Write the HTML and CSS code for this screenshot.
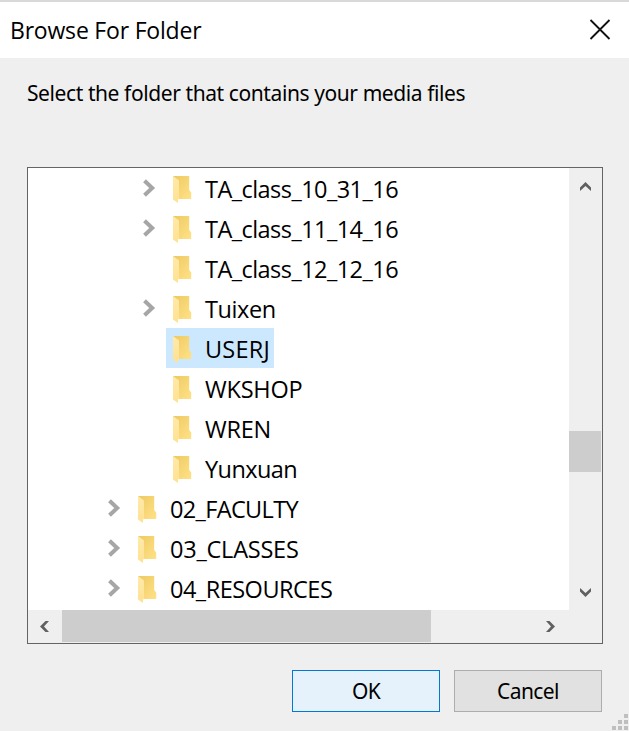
FILE: index.html
```html
<!DOCTYPE html>
<html lang="en">
<head>
<meta charset="utf-8">
<title>Browse For Folder</title>
<link rel="stylesheet" href="styles.css">
</head>
<body>
<svg width="0" height="0" class="defs" aria-hidden="true">
  <defs>
    <linearGradient id="back" x1="0" y1="0" x2="1" y2="1"><stop offset="0" stop-color="#eec962"/><stop offset="1" stop-color="#ffe287"/></linearGradient>
    <linearGradient id="front" x1="0" y1="0" x2="0" y2="1"><stop offset="0" stop-color="#ffeaaa"/><stop offset="1" stop-color="#ffe191"/></linearGradient>
    <symbol id="folder" viewBox="0 0 20 28"><path fill="url(#back)" d="M0 0h16.200v14l2 2.500V23H5V5L0 .5z"/><path fill="url(#front)" d="M0 0l6 4.500V23l-1 .5V27L0 23.500z"/></symbol>
    <symbol id="chevron" viewBox="0 0 13 19"><path fill="none" stroke="#a6a6a6" stroke-width="4" d="M1.500 1.700l7.700 7.300-7.700 7.300"/></symbol>
  </defs>
</svg>
<div class="dialog">
  <header class="titlebar">
    <span class="title">Browse For Folder</span>
    <svg class="close" width="22" height="22" viewBox="0 0 22 22"><path fill="none" stroke="#111" stroke-width="1.800" d="M1.500 1l19 19M20.500 1l-19 19"/></svg>
  </header>
  <p class="prompt">Select the folder that contains your media files</p>
  <div class="tree">
    <ul class="items">
      <li><svg class="chevron"><use href="#chevron"/></svg><span class="node"><svg class="folder"><use href="#folder"/></svg><span class="dated">TA_class_10_31_16</span></span></li>
      <li><svg class="chevron"><use href="#chevron"/></svg><span class="node"><svg class="folder"><use href="#folder"/></svg><span class="dated">TA_class_11_14_16</span></span></li>
      <li><span class="chevron"></span><span class="node"><svg class="folder"><use href="#folder"/></svg><span class="dated">TA_class_12_12_16</span></span></li>
      <li><svg class="chevron"><use href="#chevron"/></svg><span class="node"><svg class="folder"><use href="#folder"/></svg><span class="tuixen">Tuixen</span></span></li>
      <li><span class="chevron"></span><span class="node selected"><svg class="folder"><use href="#folder"/></svg><span class="userj">USERJ</span></span></li>
      <li><span class="chevron"></span><span class="node"><svg class="folder"><use href="#folder"/></svg><span class="wkshop">WKSHOP</span></span></li>
      <li><span class="chevron"></span><span class="node"><svg class="folder"><use href="#folder"/></svg><span class="wren">WREN</span></span></li>
      <li><span class="chevron"></span><span class="node"><svg class="folder"><use href="#folder"/></svg><span class="yunxuan">Yunxuan</span></span></li>
      <li class="parent"><svg class="chevron"><use href="#chevron"/></svg><span class="node"><svg class="folder"><use href="#folder"/></svg><span class="faculty">02_FACULTY</span></span></li>
      <li class="parent"><svg class="chevron"><use href="#chevron"/></svg><span class="node"><svg class="folder"><use href="#folder"/></svg><span class="classes">03_CLASSES</span></span></li>
      <li class="parent"><svg class="chevron"><use href="#chevron"/></svg><span class="node"><svg class="folder"><use href="#folder"/></svg><span class="resources">04_RESOURCES</span></span></li>
    </ul>
    <div class="vbar">
      <svg class="up" width="12" height="10" viewBox="0 0 12 10"><path fill="#606060" d="M0 5.500L5.500 0 11 5.500V9L5.500 4 0 9z"/></svg>
      <div class="vthumb"></div>
      <svg class="down" width="12" height="10" viewBox="0 0 12 10"><path fill="#606060" d="M0 0l5.500 5L11 0v3.500L5.500 9 0 3.500z"/></svg>
    </div>
    <div class="hbar">
      <svg class="left" width="10" height="12" viewBox="0 0 10 12"><path fill="#606060" d="M9 0H5.500L0 5.500 5.500 11H9L4 5.500z"/></svg>
      <div class="hthumb"></div>
      <svg class="right" width="10" height="12" viewBox="0 0 10 12"><path fill="#606060" d="M0 0h3.500L9 5.500 3.500 11H0l5-5.500z"/></svg>
    </div>
  </div>
  <div class="buttons">
    <button class="ok"><span>OK</span></button>
    <button class="cancel"><span>Cancel</span></button>
  </div>
  <svg class="grip" width="17" height="17" viewBox="0 0 17 17"><path fill="#bfbfbf" d="M12 0h4v4h-4zM6 6h4v4H6zM12 6h4v4h-4zM0 12h4v4H0zM6 12h4v4H6zM12 12h4v4h-4z"/></svg>
</div>
</body>
</html>
```
FILE: styles.css
```css
* { box-sizing: border-box; }
body { margin: 0; font-family: "Open Sans", "Noto Sans", sans-serif; color: #000; }
.defs { position: absolute; }
.dialog { position: relative; width: 629px; height: 731px; background: #efefef; border-top: 2px solid #d9d9d9; overflow: hidden; }
.titlebar { display: flex; justify-content: space-between; align-items: center; height: 56px; padding: 0 18px 0 10px; background: #fff; font-size: 23px; }
.title { letter-spacing: -0.2px; }
.prompt { margin: 19px 0 0 27px; height: 32px; line-height: 32px; font-family: "Noto Sans", sans-serif; font-size: 21px; letter-spacing: -0.41px; white-space: nowrap; }
.tree { display: grid; grid-template: 442px 33px / 541px 33px; width: 576px; height: 477px; margin: 58px 0 0 27px; border: 1px solid #646464; background: #fff; }
.items { list-style: none; margin: 0; padding: 0; overflow: hidden; }
.items li { display: flex; height: 40px; padding-left: 115px; font-size: 23.5px; line-height: 42px; white-space: nowrap; }
.items .parent { padding-left: 80px; }
.dated { letter-spacing: -0.54px; }
.tuixen { letter-spacing: -0.4px; }
.userj { letter-spacing: 0.2px; }
.wkshop, .wren, .classes { letter-spacing: -0.22px; }
.yunxuan { letter-spacing: -0.58px; }
.faculty { letter-spacing: -0.65px; }
.resources { letter-spacing: -0.5px; }
.chevron { width: 13px; height: 19px; margin: 11px 10px 0 0; }
.node { display: flex; height: 40px; padding: 0 4px 0 7px; }
.selected { background: #cce8ff; }
.folder { width: 20px; height: 28px; margin: 8px 12px 0 0; }
.vbar { display: flex; flex-direction: column; align-items: center; background: #efefef; }
.up { margin-top: 14px; }
.vthumb { width: 32px; height: 41px; margin: 239px 1px 0 0; background: #cdcdcd; }
.down { margin-top: 116px; }
.hbar { grid-column: 1 / 3; display: flex; align-items: center; background: #efefef; }
.left { margin-left: 12px; }
.hthumb { width: 369px; height: 32px; margin: 0 0 1px 12px; background: #cdcdcd; }
.right { margin-left: 115px; }
.buttons { display: flex; justify-content: flex-end; gap: 14px; margin: 26px 27px 0 0; }
button { width: 148px; height: 42px; padding: 0; border: 1px solid #adadad; background: #e1e1e1; font: 21px/40px "Noto Sans", sans-serif; letter-spacing: -0.6px; color: #000; }
.ok { border-color: #0078d7; background: #e5f1fb; }
.grip { position: absolute; right: 0; bottom: 0; }
```
